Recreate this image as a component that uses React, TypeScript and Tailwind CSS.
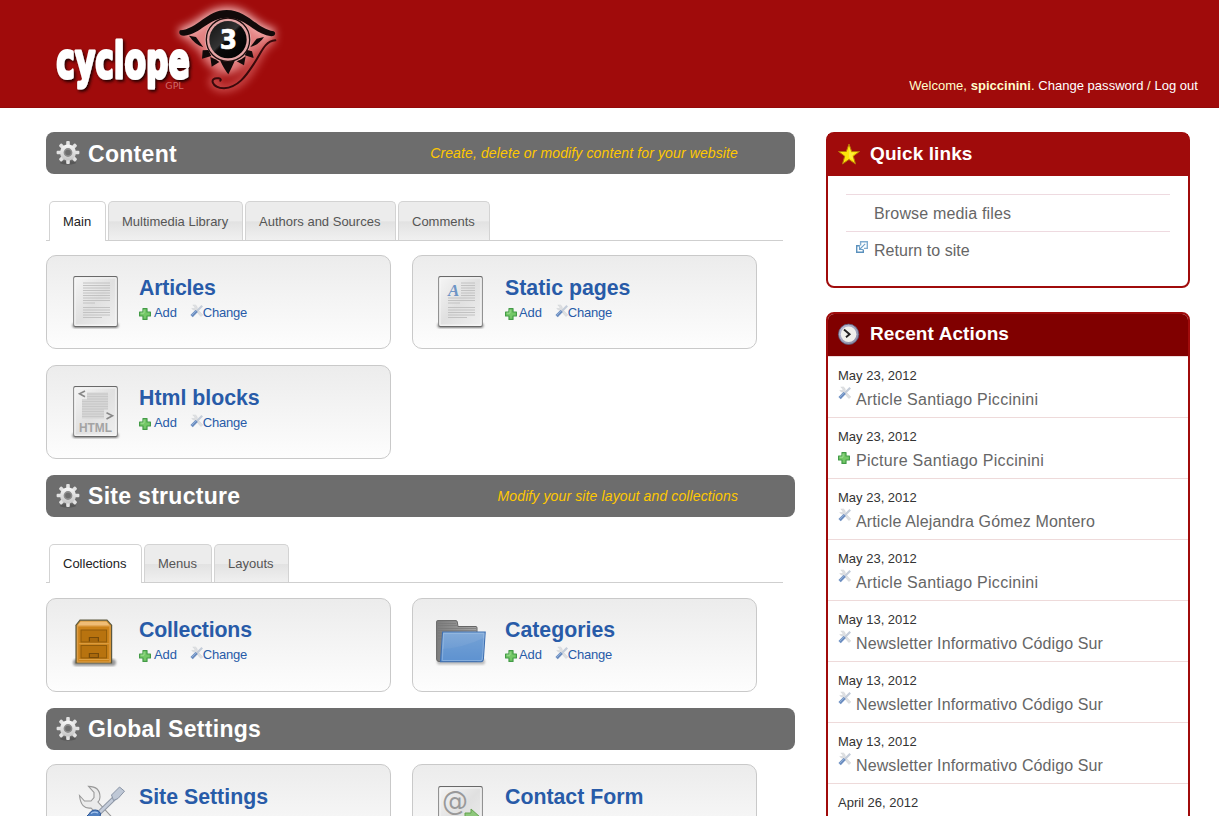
import React from "react";

function Logo() {
  return (
    <svg width="260" height="108" viewBox="0 0 780 324">
      <defs>
        <filter id="glow" x="-30%" y="-30%" width="160%" height="160%">
          <feGaussianBlur stdDeviation="12" />
        </filter>
        <filter id="shade" x="-20%" y="-20%" width="140%" height="150%">
          <feDropShadow dx="5" dy="6" stdDeviation="4" floodColor="#200" floodOpacity="1" />
        </filter>
        <linearGradient id="pupil" x1="0" y1="0" x2="1" y2="1">
          <stop offset="0" stopColor="#111" />
          <stop offset=".45" stopColor="#333" />
          <stop offset=".5" stopColor="#0c0c0c" />
          <stop offset="1" stopColor="#000" />
        </linearGradient>
      </defs>
      <g filter="url(#glow)">
        <path d="M418 100C480 85 500 35 562 35C625 35 640 90 704 102L640 160Q610 215 562 225Q500 210 480 155Z" fill="#ffb4b4" opacity=".7" />
        <path d="M418 98C480 85 500 35 562 35C625 35 640 90 704 100" fill="none" stroke="#ffd0d0" strokeWidth="26" opacity=".85" />
        <path d="M706 121C648 129 646 258 552 265C514 263 506 231 536 235" fill="none" stroke="#ff9a9a" strokeWidth="18" opacity=".6" />
      </g>
      <circle cx="564" cy="119" r="70" fill="#e5a5a5" />
      <g fill="#120a0a">
        <path d="M420 91C415 98 418 107 432 107C484 102 503 54 562 53C620 54 640 101 694 109C706 109 709 98 701 94C648 85 622 30 560 30C500 30 472 88 420 91Z" />
        <path d="M447 107L468 111L490 142C472 136 459 124 447 107Z" />
        <path d="M672 111L650 116L631 141C650 137 662 125 672 111Z" />
        <path d="M488 151L505 150L514 168L486 176Z" />
        <path d="M511 171L526 178L538 186L515 200Z" />
        <path d="M540 181Q563 189 585 181Q575 204 565 223Q553 209 540 181Z" />
        <path d="M590 184L604 178L617 169L612 196Z" />
        <path d="M614 166L622 150L636 154L641 174Z" />
      </g>
      <circle cx="564" cy="119" r="65" fill="none" stroke="#1c0c0c" strokeWidth="4" />
      <circle cx="564" cy="119" r="56" fill="url(#pupil)" />
      <path d="M706 121C672 124 664 160 640 194C618 228 594 262 552 265C514 263 506 231 536 235Q545 237 541 242" fill="none" stroke="#39090b" strokeWidth="6" strokeLinecap="round" />
      <text x="565" y="146" textAnchor="middle" textLength="52" lengthAdjust="spacingAndGlyphs" fontFamily="DejaVu Sans" fontWeight="700" fontSize="80" fill="#fff" stroke="#fff" strokeWidth="2">3</text>
      <text x="49" y="233" textLength="400" lengthAdjust="spacingAndGlyphs" fontFamily="DejaVu Sans" fontWeight="700" fontSize="149" strokeLinejoin="round" fill="#fff" stroke="#fff" strokeWidth="9" filter="url(#shade)">cyclope</text>
      <text x="376" y="268" textLength="55" lengthAdjust="spacingAndGlyphs" fontFamily="DejaVu Sans" fontWeight="400" fontSize="25" fill="#cf6a6a">GPL</text>
    </svg>
  );
}

function Gear() {
  return (
    <svg width="26" height="28" viewBox="0 0 26 28" className="shrink-0">
      <defs>
        <linearGradient id="gear" x1="0" y1="0" x2="0" y2="1">
          <stop offset="0" stopColor="#f8f8f8" />
          <stop offset="1" stopColor="#c4c4c4" />
        </linearGradient>
      </defs>
      <ellipse cx="13" cy="23.8" rx="8" ry="1.8" fill="#4a4a4a" opacity=".6" />
      <g transform="translate(0 .5)">
        <g fill="#e2e2e2">
          {[0, 45, 90, 135].map((a) => (
            <rect key={a} x="11.2" y="1.6" width="3.6" height="22.8" rx="1" transform={"rotate(" + a + " 13 13)"} />
          ))}
        </g>
        <circle cx="13" cy="13" r="8" fill="url(#gear)" />
        <circle cx="13" cy="13" r="3.6" fill="#6d6d6d" stroke="#8c8c8c" strokeWidth="1.6" />
      </g>
    </svg>
  );
}

function Plus() {
  return (
    <svg width="12" height="12" viewBox="0 0 12 12" className="shrink-0">
      <path d="M4 .6h4V4h3.4v4H8v3.4H4V8H.6V4H4z" fill="#74c867" stroke="#439b47" strokeWidth="1.2" strokeLinejoin="round" />
      <path d="M5 5.2V1.6M1.6 5.2H5" stroke="#9fdc93" fill="none" />
    </svg>
  );
}

function Tools() {
  return (
    <svg width="14" height="14" viewBox="0 0 14 14" className="shrink-0">
      <path d="M2.8 1.2L5 3 4.5 4.6 1.8 4.4Q3 6.6 5.2 6L10.8 12.4 12.8 11 7.2 5Q7.8 2.2 5.4 1Z" fill="#dfe0e2" stroke="#d2d5d9" strokeWidth=".6" />
      <path d="M6.5 7.5L12.2 1.8" stroke="#c3ccd9" strokeWidth="2.2" />
      <path d="M1.6 12.2L6.6 7" stroke="#5b81ba" strokeWidth="3.2" opacity=".9" />
      <path d="M1.6 11.4L5.8 7" stroke="#9bb8dc" strokeWidth=".9" />
    </svg>
  );
}

function Sheet({ kind }: { kind: string }) {
  const rows = [10, 12.5, 15, 17.5, 20, 22.5, 25, 27.5, 34.5, 37, 39.5, 42, 44.5];
  return (
    <svg width="54" height="58" viewBox="0 0 54 58">
      <defs>
        <linearGradient id="sheet" x1="0" y1="0" x2="1" y2="1">
          <stop offset="0" stopColor="#f6f6f6" />
          <stop offset=".5" stopColor="#e0e0e0" />
          <stop offset="1" stopColor="#f0f0f0" />
        </linearGradient>
        <filter id="soft">
          <feGaussianBlur stdDeviation="1" />
        </filter>
      </defs>
      <rect x="3.5" y="50" width="46" height="5" rx="2.5" fill="#888" filter="url(#soft)" />
      <rect x="4.7" y="3.6" width="43.6" height="50" rx="1.5" fill="url(#sheet)" stroke="#888" strokeWidth="1.2" />
      <path d="M5.5 3.5H47.5M5.5 53.5H47.5" stroke="#696969" />
      <rect x="5.9" y="4.8" width="41.2" height="47.4" rx=".6" fill="none" stroke="#fafafa" />
      {(kind === "doc" || kind === "static") && (
        <g stroke="#c2c2c2" strokeWidth="1">
          {rows.map((y) => (
            <path key={y} d={"M" + (kind === "static" && y < 23 ? 27 : 14) + " " + y + "H" + (y === 44.5 ? 33 : 41)} />
          ))}
          <path d="M14 30H26" />
        </g>
      )}
      {kind === "static" && (
        <text x="14" y="22.5" fontFamily="Liberation Serif" fontStyle="italic" fontWeight="700" fontSize="17" fill="#6d94c5">A</text>
      )}
      {kind === "html" && (
        <g>
          <path d="M18 9.5H39V26H35V35.5H13V16H18Z" fill="#d6d6d6" />
          <g stroke="#c6c6c6" strokeWidth=".9">
            {[11, 13.5, 16, 18.5, 21, 23.5, 26, 28.5, 31, 33.5].map((y) => (
              <path key={y} d={"M" + (y < 17 ? 18 : 13) + " " + y + "H" + (y > 27 ? 35 : 39)} />
            ))}
          </g>
          <path d="M16 8L10.5 10.8L16 13.8M37.5 29.8L43.5 32.8L37.5 36" fill="none" stroke="#888" strokeWidth="1.6" />
          <text x="10" y="49" textLength="33" lengthAdjust="spacingAndGlyphs" fontFamily="Liberation Sans" fontWeight="700" fontSize="12.5" fill="#a3a3a3">HTML</text>
        </g>
      )}
      {kind === "mail" && (
        <g>
          <text x="8" y="27" textLength="26" lengthAdjust="spacingAndGlyphs" fontFamily="DejaVu Sans" fontSize="27" fill="#999">@</text>
          <path d="M31 30H37V26L46 34L37 43V38H31Z" fill="#8dc77b" stroke="#65a34f" />
        </g>
      )}
    </svg>
  );
}

function Cabinet() {
  return (
    <svg width="54" height="58" viewBox="0 0 54 58">
      <defs>
        <filter id="cabShadow">
          <feGaussianBlur stdDeviation="1.3" />
        </filter>
      </defs>
      <rect x="4" y="43" width="43" height="7" rx="3.5" fill="#999" filter="url(#cabShadow)" />
      <path d="M11 4.2H38L42.6 9.2V47H7V9.2Z" fill="#d0902c" stroke="#5c583f" strokeWidth="1.2" />
      <path d="M11.6 5.4H37.4L41 9.8H8.4Z" fill="#f0bd76" />
      <rect x="8.7" y="10" width="32.2" height="36" fill="#cc831a" stroke="#dfa14d" />
      <rect x="12" y="14" width="25.6" height="12" fill="#b8730f" stroke="#8f5b0b" />
      <rect x="12" y="29.5" width="25.6" height="12.5" fill="#b8730f" stroke="#8f5b0b" />
      <path d="M9.9 27.7H39.9M9.9 43.5H39.9" stroke="#dda045" />
      <path d="M20.4 25.5V21.5H29.4V25.5M20.4 37.5V41.5H29.4V37.5Z" fill="#a9680c" stroke="#784b09" strokeWidth="1.2" />
    </svg>
  );
}

function Folder() {
  return (
    <svg width="54" height="58" viewBox="0 0 54 58">
      <defs>
        <linearGradient id="folder" x1="0" y1="0" x2="0" y2="1">
          <stop offset="0" stopColor="#83abd9" />
          <stop offset="1" stopColor="#5f92d0" />
        </linearGradient>
        <linearGradient id="back" x1="0" y1="0" x2="1" y2="0">
          <stop offset="0" stopColor="#7d7d7d" />
          <stop offset="1" stopColor="#a5a5a5" />
        </linearGradient>
        <filter id="folderShadow">
          <feGaussianBlur stdDeviation="1" />
        </filter>
      </defs>
      <g transform="translate(-1 1)">
        <rect x="3" y="42" width="48" height="5.5" rx="2" fill="#bbb" filter="url(#folderShadow)" />
        <path d="M2.6 4.5Q2.6 3.6 3.6 3.6H22Q23 3.6 23.3 5L24 9.5H42Q43 9.5 43 11V44.5H5Q2.6 44.5 2.6 42Z" fill="url(#back)" stroke="#666" />
        <path d="M4 6.5H22M4 8.5H23M4 11.5H42M4 13.5H42M4 16H9M4 19H9M4 22H8" stroke="#777" strokeWidth=".7" />
        <path d="M8.6 15H51.2L49.4 42Q49 44.8 47 44.8H6.5Z" fill="url(#folder)" stroke="#3f70b1" strokeWidth="1.1" />
        <path d="M9.5 16.3H50L48.2 42.5Q48 43.5 46.5 43.5H8.4Z" fill="none" stroke="#9bbce3" strokeWidth=".8" />
        <path d="M9 32Q28 31 49.7 21L48.7 39L46 43.5H8Z" fill="#5d91d0" opacity=".35" />
      </g>
    </svg>
  );
}

function BigTools() {
  return (
    <svg width="56" height="58" viewBox="0 0 56 58">
      <path d="M19.5 3.4Q31 3.5 31 14Q31 17 29 19L50 42L45 47L22 25Q12 26.5 10.5 12.5L15.5 18H22L25 14.5V9.5Z" fill="#ebebeb" stroke="#999" strokeWidth="1.1" />
      <path d="M30 30L46 14.5" stroke="#8d96a3" strokeWidth="4.6" />
      <path d="M30 30L46 14.5" stroke="#c4ccda" strokeWidth="2.8" />
      <path d="M42.5 12L50.5 4L55.5 8.2L49 15.5L44.5 17.5Z" fill="#bfc8d6" stroke="#8994a5" />
      <path d="M20 31Q23 25.5 29 27.5Q33 30 31 34L16 50L8 43Z" fill="#4f7fc0" stroke="#2e5694" />
      <path d="M22 30.5Q25 28 29 30" fill="none" stroke="#a8c6ec" strokeWidth="1.3" />
    </svg>
  );
}

function Icon({ name }: { name: string }) {
  if (name === "cabinet") return <Cabinet />;
  if (name === "folder") return <Folder />;
  if (name === "tools") return <BigTools />;
  return <Sheet kind={name} />;
}

type CardProps = { icon: string; title: string; size?: string; lead?: string; iconPad?: string; actions?: boolean; right?: boolean; lift?: boolean };

function Card({ icon, title, size = "text-[21.3px]", lead = "leading-[29px]", iconPad = "", actions = true, right = false, lift = false }: CardProps) {
  return (
    <div className="flex h-[94px] w-[345px] rounded-[10px] border border-[#c9c9c9] bg-linear-to-b from-[#ececec] to-[#fdfdfd] pl-[22px] pt-[17px]">
      <div className={"w-[54px] shrink-0 " + iconPad + (right ? " -ml-px mr-px" : "")}>
        <Icon name={icon} />
      </div>
      <div className="pl-4">
        <div className={"h-[30px] font-bold text-[#285ba8] " + size + " " + lead}>{title}</div>
        {actions && (
          <div className={"flex h-[22px] items-center text-[13px] leading-[22px] text-[#285ba8] " + (lift ? "-mt-[2px]" : "-mt-px")}>
            <span className="mt-[2px]"><Plus /></span>
            <span className={"tracking-[-0.1px] " + (right ? "ml-[2px]" : "ml-[3px]")}>Add</span>
            <span className="ml-[13px] -mt-1"><Tools /></span>
            <span className="-ml-px tracking-[-0.25px]">Change</span>
          </div>
        )}
      </div>
    </div>
  );
}

function Bar({ title, note, pad = "pt-[1px]" }: { title: string; note?: string; pad?: string }) {
  return (
    <div className="flex h-[42px] w-[749px] items-center rounded-[8px] bg-[#6d6d6d] pl-[9px] pr-[57px]">
      <Gear />
      <h2 className={"ml-[7px] text-[23px] font-bold leading-none tracking-[0.3px] text-white " + pad}>{title}</h2>
      <span className="ml-auto text-[14px] italic tracking-[0.12px] text-[#ffc800]">{note}</span>
    </div>
  );
}

function Tabs({ items, first }: { items: [string, string][]; first?: boolean }) {
  return (
    <div className={"mt-[27px] flex w-[737px] gap-[2px] border-b border-[#cfcfcf] pl-[3px] text-[13px] " + (first ? "h-[40px]" : "h-[39px]")}>
      {items.map(([label, w], i) => (
        <div
          key={label}
          className={
            "flex items-center rounded-t-[5px] border border-b-0 border-[#d3d3d3] pl-[13px] " + w + " " +
            (i === 0 ? "-mb-px bg-white text-[#222] " : "bg-[linear-gradient(#ececec_0,#ececec_50%,#e2e2e2_52%,#f0f0f0_100%)] pt-px text-[#555] ") +
            (first && i === 0 ? "pt-px" : "")
          }
        >
          {label}
        </div>
      ))}
    </div>
  );
}

function Star() {
  return (
    <svg width="24" height="24" viewBox="0 0 24 24">
      <path d="M12 1L14.7 8.5H22.5L16.3 13.2L18.5 21L12 16.5L5.5 21L7.7 13.2L1.5 8.5H9.3Z" fill="#fce40b" stroke="#b87508" strokeWidth="1" />
      <path d="M12 4.5L14 9.7H18L15.2 12.5L16.5 17.5L12 14.7Z" fill="#fff15a" opacity=".6" />
    </svg>
  );
}

function Clock() {
  return (
    <svg width="24" height="24" viewBox="0 0 24 24">
      <defs>
        <linearGradient id="clk" x1="0" y1="0" x2="1" y2="1">
          <stop offset="0" stopColor="#bfc3da" />
          <stop offset="1" stopColor="#8587a0" />
        </linearGradient>
      </defs>
      <circle cx="11.6" cy="11.3" r="10.2" fill="url(#clk)" stroke="#595b79" strokeWidth=".8" />
      <circle cx="11.6" cy="11.3" r="7.8" fill="#f1f1ec" />
      <path d="M7 6.5L12.6 11.3L9 14.3" fill="none" stroke="#222" strokeWidth="1.9" />
    </svg>
  );
}

function Outward() {
  return (
    <svg width="12" height="12" viewBox="0 0 12 12">
      <path d="M4.6 4.5V.7H11.3V7.4H8" fill="none" stroke="#80acd0" strokeWidth="1.4" />
      <path d="M3.8 4.7H.7V11.3H7.3V8.5" fill="none" stroke="#5b91bd" strokeWidth="1.4" />
      <path d="M9.2 2.8L4 8M3.5 5.2V8.5H7" fill="none" stroke="#6da0ca" strokeWidth="1.1" />
    </svg>
  );
}

const actions: [string, string, string, string][] = [
  ["May 23, 2012", "Article Santiago Piccinini", "edit", "tracking-[0.27px]"],
  ["May 23, 2012", "Picture Santiago Piccinini", "add", "tracking-[0.29px]"],
  ["May 23, 2012", "Article Alejandra Gómez Montero", "edit", "tracking-[0.14px]"],
  ["May 23, 2012", "Article Santiago Piccinini", "edit", "tracking-[0.27px]"],
  ["May 13, 2012", "Newsletter Informativo Código Sur", "edit", "tracking-[0.1px]"],
  ["May 13, 2012", "Newsletter Informativo Código Sur", "edit", "tracking-[0.1px]"],
  ["May 13, 2012", "Newsletter Informativo Código Sur", "edit", "tracking-[0.1px]"],
  ["April 26, 2012", "", "", ""],
];

export default function App() {
  return (
    <div className="h-[816px] w-[1219px] overflow-hidden bg-white font-['Liberation_Sans',Arial,sans-serif]">
      <header className="flex h-[108px] justify-between border-b border-[#930a0a] bg-[#a00b0b] pl-[40px] pr-[21px]">
        <Logo />
        <div className="pt-[76px] text-[13px] leading-[20px] tracking-[0.03px] text-white">
          <span className="text-[#ffffcc]">Welcome, <b>spiccinini</b>. </span>
          <span>Change password</span>
          <span className="text-[#ffffcc]"> / </span>
          <span>Log out</span>
        </div>
      </header>
      <div className="flex pl-[46px] pt-[24px]">
        <main className="w-[749px] shrink-0">
          <Bar pad="pt-[3px]" title="Content" note="Create, delete or modify content for your website" />
          <Tabs first items={[["Main", "w-[57px]"], ["Multimedia Library", "w-[135px]"], ["Authors and Sources", "w-[151px]"], ["Comments", "w-[92px]"]]} />
          <div className="mt-[14px] flex flex-wrap gap-x-[21px] gap-y-4">
            <Card icon="doc" title="Articles" size="text-[21.3px] tracking-[-0.2px]" lead="leading-[30px]" />
            <Card right icon="static" title="Static pages" lead="leading-[30px]" />
            <Card icon="html" title="Html blocks" lead="leading-[30px]" />
          </div>
          <div className="mt-4">
            <Bar title="Site structure" note="Modify your site layout and collections" />
          </div>
          <Tabs items={[["Collections", "w-[93px]"], ["Menus", "w-[68px]"], ["Layouts", "w-[75px]"]]} />
          <div className="mt-[15px] flex gap-[21px]">
            <Card lift icon="cabinet" title="Collections" size="text-[21.3px] tracking-[-0.18px]" lead="leading-[28px]" />
            <Card lift right icon="folder" title="Categories" lead="leading-[28px]" iconPad="pl-px" />
          </div>
          <div className="mt-4">
            <Bar title="Global Settings" />
          </div>
          <div className="mt-[14px] flex gap-[21px]">
            <Card icon="tools" title="Site Settings" lead="leading-[30px]" iconPad="pt-px" actions={false} />
            <Card right icon="mail" title="Contact Form" lead="leading-[30px]" iconPad="pt-px" actions={false} />
          </div>
        </main>
        <aside className="ml-[31px] w-[364px] shrink-0">
          <section className="h-[156px] rounded-[8px] border-2 border-[#a00b0b]">
            <h3 className="flex h-[42px] items-center bg-[#a00b0b] pl-[9px] text-[19px] font-bold text-white">
              <Star />
              <span className="-mt-[2px] ml-[9px] tracking-[0.1px]">Quick links</span>
            </h3>
            <ul className="mx-[18px] mt-[18px] text-[16px] tracking-[0.16px] text-[#666]">
              <li className="h-[37px] border-t border-[#eedae0] pl-7 leading-[37px]">Browse media files</li>
              <li className="flex h-[37px] border-t border-[#eedae0] pl-[10px] leading-[37px] tracking-[0.04px]">
                <span className="mr-[6px] pt-[9px] leading-none"><Outward /></span>
                Return to site
              </li>
            </ul>
          </section>
          <section className="mt-6 h-[600px] overflow-hidden rounded-t-[8px] border-2 border-[#a00b0b]">
            <h3 className="flex h-[42px] items-center bg-[#800000] pl-[9px] text-[19px] font-bold text-white">
              <Clock />
              <span className="-mt-[2px] ml-[9px] tracking-[0.1px]">Recent Actions</span>
            </h3>
            <ul className="border-t border-[#eedada]">
              {actions.map(([date, text, kind, track], i) => (
                <li key={i} className="h-[61px] border-b border-[#eedada] pl-[10px] pt-[9px]">
                  <div className="text-[13px] leading-[20px] text-[#333]">{date}</div>
                  <div className={"flex h-[28px] text-[16px] leading-[28px] text-[#666] " + track}>
                    <span className="w-[18px]">
                      {kind === "edit" ? <Tools /> : null}
                      {kind === "add" ? <span className="block pt-[5px]"><Plus /></span> : null}
                    </span>
                    {text}
                  </div>
                </li>
              ))}
            </ul>
          </section>
        </aside>
      </div>
    </div>
  );
}
